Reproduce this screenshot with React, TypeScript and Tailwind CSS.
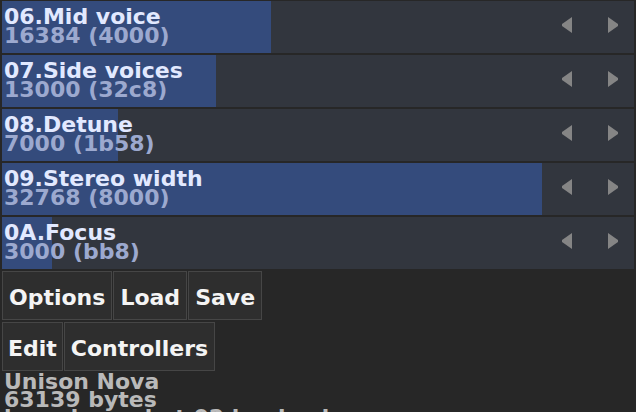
import React from "react";

const rows = [
  { title: "06.Mid voice", value: "16384 (4000)", fill: 269 },
  { title: "07.Side voices", value: "13000 (32c8)", fill: 214 },
  { title: "08.Detune", value: "7000 (1b58)", fill: 116 },
  { title: "09.Stereo width", value: "32768 (8000)", fill: 540 },
  { title: "0A.Focus", value: "3000 (bb8)", fill: 50 },
];

function LeftArrow() {
  return (
    <svg width="10" height="16" viewBox="0 0 10 16" className="block">
      <polygon points="10,0 10,16 0,9 0,7" fill="#858585" />
    </svg>
  );
}

function RightArrow() {
  return (
    <svg width="10" height="16" viewBox="0 0 10 16" className="block">
      <polygon points="0,0 0,16 10,9 10,7" fill="#858585" />
    </svg>
  );
}

function Btn({ label, pad }: { label: string; pad?: boolean }) {
  return (
    <div
      className={
        pad
          ? "h-[49px] border border-[#464646] bg-[#2e2e2e] px-[5px] pt-[16px] text-[#f4f4f4] leading-[19px]"
          : "h-[49px] border border-[#464646] bg-[#2e2e2e] px-[6px] pt-[16px] text-[#f4f4f4] leading-[19px]"
      }
    >
      {label}
    </div>
  );
}

export default function App() {
  return (
    <div
      className="w-[636px] h-[412px] overflow-hidden bg-[#272727] font-bold text-[22px]"
      style={{ fontFamily: '"DejaVu Sans", "Liberation Sans", sans-serif' }}
    >
      <div className="flex flex-col gap-[2px] pt-[1px] pl-[2px] w-[634px]">
        {rows.map((r) => (
          <div key={r.title} className="relative h-[52px] bg-[#32363e] flex">
            <div
              className="absolute top-0 bottom-0 left-0 bg-[#344b7c]"
              style={{ width: r.fill }}
            />
            <div className="relative flex-1 pl-[2px] pt-[6px] leading-[19px]">
              <div className="text-[#e2e9ff]">{r.title}</div>
              <div className="text-[#9ca9cf]">{r.value}</div>
            </div>
            <div className="relative flex items-start pt-[16px] gap-[36px] pr-[16px]">
              <LeftArrow />
              <RightArrow />
            </div>
          </div>
        ))}
      </div>
      <div className="flex flex-col gap-[2px] pt-[2px] pl-[2px]">
        <div className="flex gap-[1px]">
          <Btn label="Options" />
          <Btn label="Load" />
          <Btn label="Save" />
        </div>
        <div className="flex gap-[1px]">
          <Btn label="Edit" pad />
          <Btn label="Controllers" />
        </div>
      </div>
      <div className="pl-[4px] pt-[2px] leading-[18px] text-[#b9b9b9]">
        <div>Unison Nova</div>
        <div>63139 bytes</div>
        <div>based on what 02 banks d</div>
      </div>
    </div>
  );
}
